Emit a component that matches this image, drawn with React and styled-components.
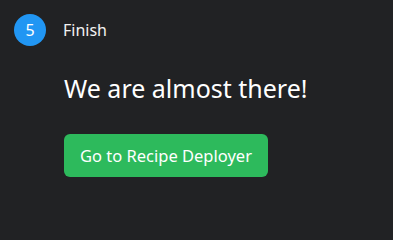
import React from 'react';
import styled, { createGlobalStyle } from 'styled-components';

const GlobalStyle = createGlobalStyle`
  html, body {
    margin: 0;
    padding: 0;
    background: #212224;
    font-family: "Noto Sans", "Open Sans", sans-serif;
    color: #fff;
  }
`;

const Page = styled.div`
  padding: 14px 14px;
  height: 203px;
  box-sizing: border-box;
  overflow: hidden;
`;

const StepHeader = styled.div`
  display: flex;
  align-items: center;
  gap: 17px;
`;

const StepBadge = styled.div`
  width: 32px;
  height: 32px;
  border-radius: 50%;
  background: #2196f3;
  color: #fff;
  display: flex;
  align-items: center;
  justify-content: center;
  font-size: 16px;
`;

const StepLabel = styled.span`
  font-size: 16px;
  color: #f2f2f2;
`;

const StepBody = styled.div`
  padding-left: 50px;
  display: flex;
  flex-direction: column;
  align-items: flex-start;
`;

const Title = styled.h2`
  margin: 27px 0 31px;
  font-size: 25px;
  font-weight: 400;
  line-height: 30px;
`;

const DeployButton = styled.button`
  background: #2dba5c;
  color: #fff;
  border: none;
  border-radius: 6px;
  height: 43px;
  padding: 0 16px;
  font-family: inherit;
  font-size: 16.5px;
  cursor: pointer;
`;

export default function App() {
  return (
    <>
      <GlobalStyle />
      <Page>
        <StepHeader>
          <StepBadge>5</StepBadge>
          <StepLabel>Finish</StepLabel>
        </StepHeader>
        <StepBody>
          <Title>We are almost there!</Title>
          <DeployButton>Go to Recipe Deployer</DeployButton>
        </StepBody>
      </Page>
    </>
  );
}
